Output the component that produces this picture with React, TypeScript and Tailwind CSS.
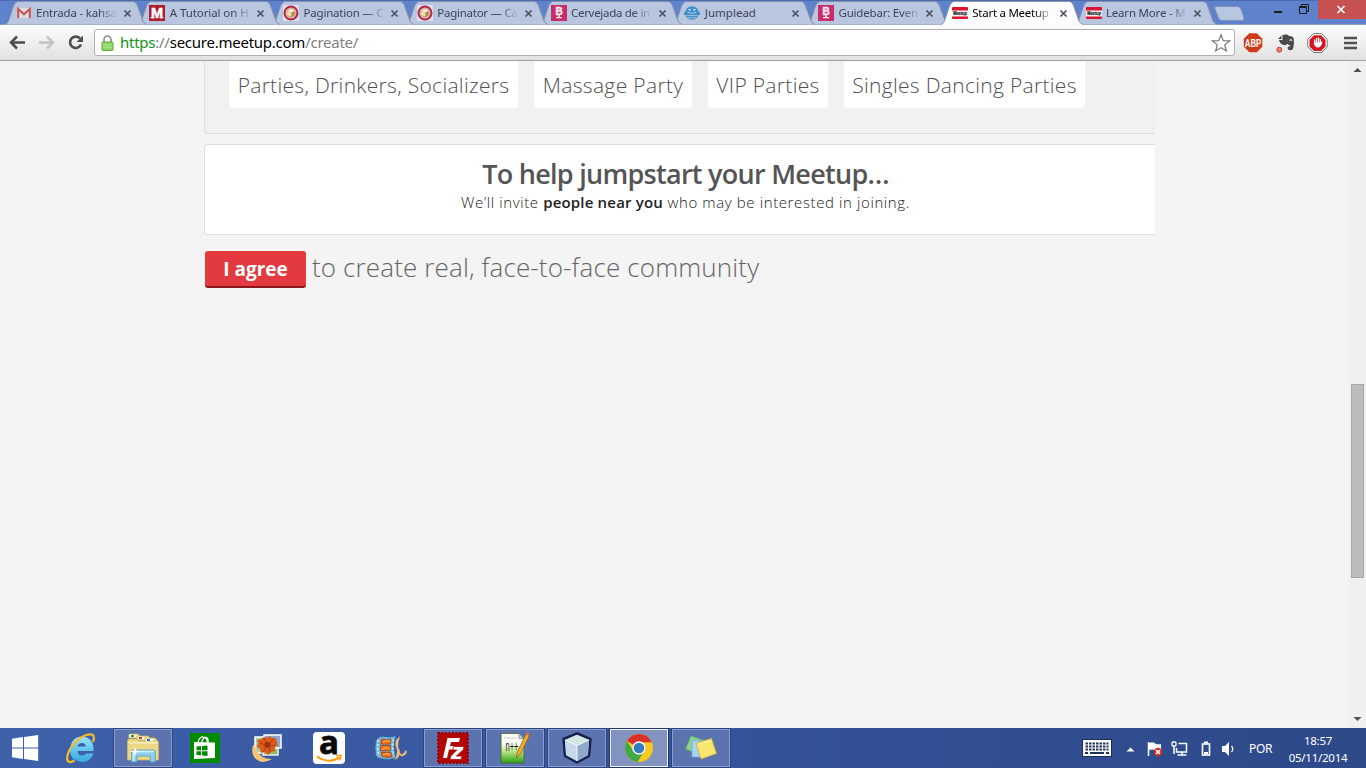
import React from "react";

type TabInfo = { title: string; icon: React.ReactNode; spacing: string; active?: boolean; fade?: boolean };

const GmailIcon = () => (
  <svg width="16" height="16" viewBox="0 0 16 16">
    <rect x="1.500" y="3" width="13" height="10" fill="#dcdde6" />
    <path d="M2.200 13V4l5.800 5.200L13.800 4v9" fill="none" stroke="#c9574f" strokeWidth="2.200" />
  </svg>
);

const MIcon = () => (
  <svg width="16" height="16" viewBox="0 0 16 16">
    <rect width="16" height="16" fill="#b01c30" />
    <text x="8" y="13.200" textAnchor="middle" fontSize="14.500" fontWeight="700" fontFamily="Liberation Sans, sans-serif" fill="#fff" stroke="#fff" strokeWidth=".5">M</text>
    <path d="M1.500 12.700h4M10.500 12.700h4" stroke="#fff" />
  </svg>
);

const CakeIcon = () => (
  <svg width="16" height="16" viewBox="0 0 16 16">
    <rect width="16" height="16" fill="#dfe0ec" />
    <circle cx="8" cy="8" r="6.500" fill="#d9b7a6" stroke="#b32a47" strokeWidth="2" />
    <path d="M4.200 6l3-1.800 4.600 1v5L8 12.200l-3.800-2z" fill="#c08f4e" />
    <path d="M4.200 6l3-1.800 4.600 1L8.500 7.400z" fill="#fbf6e0" />
    <path d="M4.200 6.500l4 1.300v3.700l-4-1.600z" fill="#f3e6c0" />
  </svg>
);

const BIcon = () => (
  <svg width="16" height="16" viewBox="0 0 16 16">
    <rect width="16" height="16" fill="#c52e69" />
    <text x="8" y="10" textAnchor="middle" fontSize="10" fontWeight="700" fontFamily="Liberation Sans, sans-serif" fill="#f6e4ee" stroke="#f6e4ee" strokeWidth=".5">B</text>
    <path d="M7.200 10h1.600v2.500H7.200zM5 12h6v1.300H5z" fill="#f6e4ee" />
  </svg>
);

const JumpleadIcon = () => (
  <svg width="16" height="16" viewBox="0 0 16 16">
    <circle cx="8" cy="8" r="6.800" fill="#3c8fcb" />
    <path d="M4.500 4.800h2.200M9.300 4.800h2.200" stroke="#cfe4f5" strokeWidth="1.600" />
    <rect x="0" y="6.500" width="16" height="3.800" rx="1.500" fill="#3c8fcb" />
    <path d="M3.500 7.200q4.500 2.400 9 0" fill="none" stroke="#b9d3ec" strokeWidth=".9" />
    <path d="M2 10.600h12M4 12.800h8" stroke="#b9c9e2" strokeWidth=".8" />
  </svg>
);

const MeetupIcon = () => (
  <svg width="16" height="16" viewBox="0 0 16 16">
    <rect y="2" width="16" height="12" rx="1" fill="#e0142f" />
    <rect y="5.500" width="16" height="6" fill="#f4eef0" />
    <text x="8" y="10" textAnchor="middle" fontSize="4.800" textLength="13.500" lengthAdjust="spacingAndGlyphs" fontWeight="700" fontFamily="Liberation Sans, sans-serif" fill="#151515" stroke="#151515" strokeWidth=".2">Meetup</text>
  </svg>
);

const TABS: TabInfo[] = [
  { title: "Entrada - kahsa", icon: <GmailIcon />, spacing: "tracking-[-0.200px]", fade: true },
  { title: "A Tutorial on H", icon: <MIcon />, spacing: "tracking-[-0.080px]", fade: true },
  { title: "Pagination — C", icon: <CakeIcon />, spacing: "tracking-[-0.200px]", fade: true },
  { title: "Paginator — Ca", icon: <CakeIcon />, spacing: "tracking-[-0.250px]", fade: true },
  { title: "Cervejada de in", icon: <BIcon />, spacing: "tracking-[-0.300px]", fade: true },
  { title: "Jumplead", icon: <JumpleadIcon />, spacing: "tracking-[0.020px]" },
  { title: "Guidebar: Even", icon: <BIcon />, spacing: "tracking-[-0.200px]", fade: true },
  { title: "Start a Meetup", icon: <MeetupIcon />, spacing: "tracking-[-0.260px]", active: true, fade: true },
  { title: "Learn More - M", icon: <MeetupIcon />, spacing: "tracking-[-0.200px]", fade: true },
];

function Tab({ tab, index }: { tab: TabInfo; index: number }) {
  return (
    <div
      className="relative flex h-[25px] w-[133.750px] shrink-0 items-center pt-px pl-[12px]"
      style={{ zIndex: tab.active ? 20 : 10 - index }}
    >
      <svg className="absolute top-0 left-0" width="143" height="25" viewBox="0 0 143 25">
        <path
          d="M0 24.500Q2.500 23.500 3.500 21L8.500 6Q9.800 2.500 12.500 1.500H128.500Q131 2 132.300 5L138 21Q139 23.500 142 24.500"
          fill={tab.active ? "#fdfdfd" : "#b9c6df"}
          stroke={tab.active ? "#8a96ac" : "#8290ad"}
        />
        {tab.active && <path d="M1 24.500h140" stroke="#fbfbfb" />}
      </svg>
      <div className="relative -ml-px h-4 w-4 shrink-0">{tab.icon}</div>
      <div
        className={
          "relative ml-[4.500px] w-[82px] font-['Noto_Sans',sans-serif] text-[11.500px] leading-4 whitespace-nowrap " +
          tab.spacing +
          (tab.active ? " text-black " : " text-[#3c4357] ") +
          (tab.fade ? "[mask-image:linear-gradient(to_right,black_76%,transparent)]" : "")
        }
      >
        {tab.title}
      </div>
      <svg className="relative ml-[4.500px] shrink-0" width="9" height="9" viewBox="0 0 9 9">
        <path d="M1.500 1.500l6 6M7.500 1.500l-6 6" stroke="#4b5261" strokeWidth="1.700" />
      </svg>
    </div>
  );
}

function TabStrip() {
  return (
    <div className="relative flex h-[25px] border-b border-[#8f9cb5] bg-[#5e82cb] pl-[4.500px] shadow-[inset_0_1px_0_#4d6cb0]">
      {TABS.map((tab, i) => (
        <Tab key={tab.title} tab={tab} index={i} />
      ))}
      <svg className="mt-[5px] ml-[5px] shrink-0" width="34" height="17" viewBox="0 0 34 17">
        <path d="M3 1.500H24.500Q27 1.500 28 4l3 9q.5 2.500-2 2.500H9Q6.500 15.500 5.500 13L2 4Q1 1.500 3 1.500z" fill="#b9c6df" stroke="#7f92bb" />
      </svg>
      <div className="ml-auto flex">
        <svg width="48" height="20" viewBox="0 0 48 20">
          <path d="M4 12h8" stroke="#1d1d1d" strokeWidth="2" />
          <path d="M29.500 6.500h7v7h-7zM29.500 7.500h7M31.500 6V4.500h7v7H37" fill="none" stroke="#1d1d1d" />
        </svg>
        <div className="flex h-[19px] w-[48px] items-center justify-center bg-[#c75050] pr-[2px]">
          <svg width="10" height="9" viewBox="0 0 10 9">
            <path d="M1.500 1l7 7M8.500 1l-7 7" stroke="#fff" strokeWidth="1.700" />
          </svg>
        </div>
      </div>
    </div>
  );
}

function Toolbar() {
  return (
    <div className="flex h-[36px] items-center border-b border-[#a0a0a0] bg-linear-to-b from-[#fdfdfd] to-[#e1e1e1]">
      <svg className="shrink-0" width="94" height="35" viewBox="0 0 94 35">
        <path d="M25 17.500H11.500M17 11.500l-6 6 6 6" fill="none" stroke="#4d4d4d" strokeWidth="2.500" />
        <path d="M39 17.500h13.500M47 11.500l6 6-6 6" fill="none" stroke="#c3c3c3" strokeWidth="2.500" />
        <path d="M80 13.500A5.700 5.700 0 1 0 81 19.500" fill="none" stroke="#4d4d4d" strokeWidth="2.600" />
        <path d="M83 10.500v6.500h-6.500z" fill="#4d4d4d" />
      </svg>
      <div className="flex h-[27px] w-[1141px] shrink-0 items-center rounded-[3px] border border-[#b0b0b0] bg-white pl-[6px]">
        <svg className="shrink-0" width="13" height="16" viewBox="0 0 13 16">
          <path d="M3 7.500V4.500a3.500 3.500 0 0 1 7 0v3" fill="none" stroke="#8b8b8b" strokeWidth="1.600" />
          <rect x="1" y="7" width="11" height="8.500" rx=".8" fill="#8fd565" stroke="#5fa73d" />
          <path d="M2 10h9M2 12.500h9" stroke="#b0e68f" strokeWidth=".8" />
        </svg>
        <div className="ml-[6px] flex-1 pb-[2px] font-['Noto_Sans',sans-serif] text-[15px] leading-5 tracking-[-0.250px] whitespace-nowrap text-[#808080]">
          <span className="text-[#0e9314]">https</span>://<span className="text-black">secure.meetup.com</span>/create/
        </div>
        <svg className="mr-[3px] shrink-0" width="20" height="20" viewBox="0 0 20 20">
          <path d="M10 1.800l2.300 5.800 6.200.3-4.800 4 1.700 6.100L10 14.600 4.600 18l1.700-6.100-4.800-4 6.200-.3z" fill="#fff" stroke="#777" strokeWidth="1.200" />
        </svg>
      </div>
      <svg className="shrink-0" width="131" height="35" viewBox="0 0 131 35">
        <path d="M14.300 8.300h7.500l5.500 5.500v8l-5.500 5.500h-7.500L8.800 21.800v-8z" fill="#cf3a1d" />
        <text x="18" y="21.500" textAnchor="middle" fontSize="10.500" textLength="16.500" lengthAdjust="spacingAndGlyphs" fontWeight="700" fontFamily="Liberation Sans, sans-serif" fill="#fff">ABP</text>
        <path d="M43 14l3.500-3.500V14zM47.500 10q5-1.200 6.500 1 4.200-.2 4.700 2.500.8 4.500-.4 9.500-.6 2.500-3.500 2.300-2.600-.5-2-3 .7-1.300 2.400-.9l.1-1q-2.300-.2-2.700-1.600-1.800 1.800-3.600 1.300-4-.5-5-5h3.500z" fill="#4a4a4a" />
        <path d="M54.500 15.500q1.500-1.500 2.500.2" fill="none" stroke="#ddd" strokeWidth="1.300" />
        <circle cx="44.300" cy="24.700" r="2.500" fill="#ed806d" stroke="#b5493c" />
        <path d="M78.500 8.500h8l5.700 5.700v7.600l-5.700 5.700h-8L72.800 21.800v-7.600z" fill="#fff" stroke="#777" />
        <path d="M79 10.300h7l4.500 4.500v6.800L86 26h-7l-4.500-4.500v-6.700z" fill="#d31721" />
        <path d="M79.700 15v4M81.600 13.300v5M83.500 13v5M85.300 14.500v4" stroke="#fff" strokeWidth="1.300" strokeLinecap="round" />
        <path d="M79 17.500h6.500l1.500-1q.8 0 .2 1.200-1.200 4.800-4.300 4.800-3.300 0-3.900-5z" fill="#fff" />
        <path d="M109 13h13M109 18h13M109 23h13" stroke="#505050" strokeWidth="2.600" />
      </svg>
    </div>
  );
}

const CHIPS: { label: string; cls: string }[] = [
  { label: "Parties, Drinkers, Socializers", cls: "w-[289px] tracking-[0.300px]" },
  { label: "Massage Party", cls: "w-[158px] tracking-[0.350px]" },
  { label: "VIP Parties", cls: "w-[120px] tracking-[0.320px]" },
  { label: "Singles Dancing Parties", cls: "w-[241px] tracking-[0.300px]" },
];

function Page() {
  return (
    <div className="flex h-[667px] bg-[#f4f4f4] font-['Open_Sans',sans-serif]">
      <main className="w-[1155px] pl-[204px]">
        <div className="flex h-[73px] gap-4 rounded-bl-[4px] border-b border-l border-[#dedede] bg-[#f1f1f1] pl-[24px]">
          {CHIPS.map((c) => (
            <div
              key={c.label}
              className={"flex h-[47px] justify-center rounded-b-[4px] bg-white pt-[9px] text-[21px] leading-[30px] font-light whitespace-nowrap text-[#505050] " + c.cls}
            >
              {c.label}
            </div>
          ))}
        </div>
        <section className="mt-[10px] h-[91px] rounded-l-[4px] border-y border-l border-[#dedede] bg-white pt-[11px] pl-[11px] text-center">
          <h2 className="text-[27px] leading-[36px] font-semibold tracking-[-0.720px] whitespace-nowrap text-[#555]">To help jumpstart your Meetup…</h2>
          <p className="text-[15px] leading-[20px] tracking-[0.610px] whitespace-nowrap text-[#222]">
            <span className="font-light">We’ll invite </span>
            <b className="font-semibold tracking-[0.180px]">people near you</b>
            <span className="font-light"> who may be interested in joining.</span>
          </p>
        </section>
        <div className="mt-[16px] flex pl-px">
          <button className="h-[37px] w-[101px] rounded-[3px] border-b-2 border-[#8c181c] bg-[#e23a3e] text-[19px] leading-[34px] font-bold text-white">I agree</button>
          <div className="ml-[6px] text-[26px] leading-[32px] font-light tracking-[0.140px] whitespace-nowrap text-[#666]">to create real, face-to-face community</div>
        </div>
      </main>
      <aside className="ml-auto flex w-[17px] flex-col items-center bg-[#f0f0f0]">
        <svg width="17" height="17" viewBox="0 0 17 17">
          <path d="M4.500 11h8l-4-4z" fill="#505050" />
        </svg>
        <div className="mt-[306px] h-[194px] w-[13px] border border-[#a8a8a8] bg-[#bcbcbc]" />
        <svg className="mt-auto" width="17" height="17" viewBox="0 0 17 17">
          <path d="M4.500 6h8l-4 4z" fill="#505050" />
        </svg>
      </aside>
    </div>
  );
}

const WindowsLogo = () => (
  <svg width="28" height="28" viewBox="0 0 28 28">
    <path d="M1 4.700l11-1.600v10.400H1zM13 3l14.200-2v12.500H13zM1 14.500h11v10.400L1 23.300zM13 14.500h14.200V27L13 25z" fill="#fff" />
  </svg>
);

const IEIcon = () => (
  <svg width="32" height="32" viewBox="0 0 32 32">
    <defs>
      <linearGradient id="ie" x1="0" y1="0" x2="0" y2="1">
        <stop offset="0" stopColor="#9be4fb" />
        <stop offset="1" stopColor="#34a9e2" />
      </linearGradient>
    </defs>
    <path d="M28.500 19H12.500q.5 4.500 4.500 4.500 3 0 4.300-2H28.500Q25.500 30 17 30 5 29 5 17.500 6 5 17 4.500 29 5.500 28.500 19zM12.500 14.500h8.500q-.6-3.500-4-3.600-3.900.1-4.500 3.600z" fill="url(#ie)" />
    <path d="M28 10Q31.500 0 21 3 9.500 8 4 19 0 28.500 4.500 30q2.500.3 5-1.500" fill="none" stroke="#f3bd27" strokeWidth="2.200" />
  </svg>
);

const ExplorerIcon = () => (
  <svg width="34" height="32" viewBox="0 0 34 32">
    <path d="M3 6V3q0-1 1-1h8l2 2v2z" fill="#f2dc93" stroke="#d3b35e" strokeWidth=".7" />
    <path d="M11 8V5q0-1 1-1h10l2 2v3z" fill="#f2dc93" stroke="#d3b35e" strokeWidth=".7" />
    <path d="M19 10V7q0-1 1-1h9l2 2v3z" fill="#f2dc93" stroke="#d3b35e" strokeWidth=".7" />
    <path d="M1.500 9q0-2 1.500-2h8l2 2h18q1.500 0 1.500 1.500V28h-31z" fill="#eed783" stroke="#d4b660" strokeWidth=".8" />
    <path d="M3 4h7M12 6h6M20 8h7" stroke="#fff" strokeWidth="2.500" />
    <path d="M5 3h3v2H5z" fill="#1aa32b" />
    <path d="M13 5h3v2h-3z" fill="#c93926" />
    <path d="M21 7h3v2h-3z" fill="#1972cf" />
    <path d="M2.500 10.800h29" stroke="#faf0bd" strokeWidth="1.500" />
    <path d="M5.500 30V20q0-2 2-2h20q1.800 0 1.800 2v10h-5v-6H11v6z" fill="#8ed0ee" stroke="#4d9dcb" strokeWidth=".8" />
    <path d="M7 19.500h21M7.500 21v8" stroke="#d8f4ff" strokeWidth="1.300" />
    <path d="M9 14l1 4.500 4 1-4 1-1 4-1-4-4-1 4-1z" fill="#fff" />
  </svg>
);

const StoreIcon = () => (
  <svg width="30" height="30" viewBox="0 0 30 30">
    <rect width="30" height="30" fill="#008a00" />
    <path d="M4 9l21 .500v15.500L4 26z" fill="#fff" />
    <path d="M8 9.500q1.500-6 5-5.500 4 0 4.500 5.500M11.500 9.500q2-5.500 4.500-5 2.500 0 2 5" fill="none" stroke="#fff" strokeWidth="1.300" />
    <path d="M6.500 13.500l4.500-.5v4.300H6.500zM12 13l5.500-.6v4.900H12zM6.500 18.300H11v4l-4.500-.4zM12 18.300h5.500v4.600l-5.500-.5z" fill="#008a00" />
  </svg>
);

const PhotosIcon = () => (
  <svg width="32" height="30" viewBox="0 0 32 30">
    <path d="M4 4h10v16H4z" fill="#a7cfb0" stroke="#fff" strokeWidth="1.500" />
    <path d="M12 13h15v9H12z" fill="#92bb65" stroke="#eee" strokeWidth="1.500" />
    <rect x="13" y="2" width="17" height="13" fill="#8aa8d4" stroke="#fff" strokeWidth="1.500" />
    <path d="M13 4l3 1 3-2 2 2h4l1 4 1 3-3 2v4l-4 1-3 3-3-3-4 1-1-4-3-2 1-4-1-3 4-1z" fill="#dd5a18" />
    <circle cx="16.500" cy="12" r="3" fill="#9b3515" />
    <path d="M13 5l2 5M23 6l-5 4M9 10l5 2M24 12l-5 1M12 19l3-5M19 20l-1-5" stroke="#9c3b13" strokeWidth=".8" />
    <path d="M2 12Q-1 24 8 28q6 2.500 13-2Q9 26 5 16 4 12 2 12z" fill="#f6c477" />
  </svg>
);

const AmazonIcon = () => (
  <svg width="32" height="32" viewBox="0 0 32 32">
    <rect width="32" height="32" rx="4" fill="#fff" />
    <text x="16" y="22" textAnchor="middle" fontSize="33" fontWeight="700" fontFamily="Open Sans, sans-serif" fill="#080808" stroke="#080808" strokeWidth=".8">a</text>
    <path d="M4 24.500q12 8 23 .7" fill="none" stroke="#ff9900" strokeWidth="2" />
    <path d="M23 24q6-2 5 .8-.5 2.300-2 3.500" fill="none" stroke="#ff9900" strokeWidth="1.400" />
  </svg>
);

const MovieIcon = () => (
  <svg width="34" height="28" viewBox="0 0 34 28">
    <path d="M2 7Q4 2 9 2.500q8 1.500 13-1-2.500 6-2 12t2 10q-6 3-13 1.500-5-.5-7-3-2-8 0-15z" fill="#79b9e0" stroke="#2a6ca6" strokeWidth=".8" />
    <path d="M7.500 5q4 1 9.500 0l-.7 5q-4.500.6-9.500 0zM6.500 11.500h10v5.500h-10zM7 18.500h10l1 4.500q-5 1-10-.5z" fill="#f06a19" stroke="#893d23" strokeWidth=".7" />
    <path d="M4 6Q3 14 5 22M19.500 5.500q-1.500 8 .3 16" fill="none" stroke="#e3f2fa" strokeWidth="1.400" strokeDasharray="2 2" />
    <path d="M26 2.500q-5.500 3-4.500 9 2.500 5 1 10-.7 2.500-2.500 4 5-.5 5.500-6-.2-4-1.500-7 0-5 2-10z" fill="#edc78e" stroke="#a98253" strokeWidth=".5" />
    <path d="M24.500 15q0 6 4 6.500 3-1 3.500-5M29 20q2-1 3.500-.5" fill="none" stroke="#e3b87c" strokeWidth="1.800" />
    <path d="M9 8.500l4-2 3 1.500M8 15.500l4-2 4 1.500M9 21l4-1.500 3 1" stroke="#ffb437" strokeWidth="1.200" fill="none" />
  </svg>
);

const FileZillaIcon = () => (
  <svg width="32" height="32" viewBox="0 0 32 32">
    <rect x="1" y="1" width="30" height="30" fill="#b30707" stroke="#970000" strokeWidth="2" strokeDasharray="2 1.500" />
    <path d="M6 26L10.500 6H23l-1 4h-8l-1 4h6l-1 3.500h-6L10 26z" fill="#fff" />
    <path d="M16.500 14.500H27l-.7 3.300-7 6.200H25l-.7 3.500H13l.8-3.500 6-6h-4z" fill="#fff" stroke="#b30707" strokeWidth=".8" />
  </svg>
);

const NotepadIcon = () => (
  <svg width="30" height="32" viewBox="0 0 30 32">
    <defs>
      <linearGradient id="npp" x1="0" y1="0" x2="0" y2="1">
        <stop offset=".35" stopColor="#fcfcf7" />
        <stop offset=".6" stopColor="#bce58b" />
        <stop offset="1" stopColor="#2da00c" />
      </linearGradient>
    </defs>
    <path d="M1 1.500h18l5 5V31H1z" fill="url(#npp)" stroke="#476c3b" />
    <path d="M2 1h17" stroke="#777" strokeDasharray="1.500 1.500" strokeWidth="2" />
    <path d="M19 1.500v5h5z" fill="#ced6d6" stroke="#777" strokeWidth=".7" />
    <path d="M4 6h13" stroke="#cdd5cf" />
    <text x="5.500" y="19" fontSize="14" textLength="13" lengthAdjust="spacingAndGlyphs" fontFamily="Liberation Sans, sans-serif" fill="#17191a">n++</text>
    <path d="M26 2L17.500 20l-1.300 6 4.500-4.500L29.500 3.500z" fill="#efad32" stroke="#9b621b" strokeWidth=".8" />
    <path d="M26.500 0l3.300 1.500-1 2.300-3.300-1.600z" fill="#d86b5c" />
  </svg>
);

const CubeIcon = () => (
  <svg width="32" height="32" viewBox="0 0 32 32">
    <path d="M16 1.500L29.500 7 28 24 16 30.500 4 24 2.500 7z" fill="#a9c2d6" stroke="#18204c" strokeWidth="2.500" strokeLinejoin="round" />
    <path d="M16 2.800L28 8 16 13.500 4 8z" fill="#d4e6e2" />
    <path d="M4 8l12 5.500V29L5 23z" fill="#c6d8e9" />
    <path d="M28 8l-12 5.500V29l11-6z" fill="#8fa9ca" />
    <path d="M16 13.500V29M4 8l12 5.500L28 8" stroke="#eff8ff" fill="none" />
  </svg>
);

const ChromeIcon = () => (
  <svg width="30" height="30" viewBox="0 0 30 30">
    <circle cx="15" cy="15" r="14" fill="#f6c91c" />
    <path d="M15 15L2.900 8A14 14 0 0 1 27.800 9.300H15z" fill="#d9322c" />
    <path d="M2.900 8A14 14 0 0 0 13.700 29L19.500 19 15 15 9.300 18z" fill="#42a746" />
    <circle cx="15" cy="15" r="6.700" fill="#f5f7f7" />
    <circle cx="15" cy="15" r="5.300" fill="#367bc2" />
  </svg>
);

const NotesIcon = () => (
  <svg width="34" height="28" viewBox="0 0 34 28">
    <path d="M7 2l12 4-5 14L1.500 15z" fill="#8fd58c" stroke="#57ab66" strokeWidth=".8" />
    <path d="M8 6.500h13V23H8z" fill="#a9d4fa" stroke="#6ca8df" strokeWidth=".8" />
    <path d="M12 9l15.500-4.500 5 15L17 25z" fill="#f8e66f" stroke="#c8ad38" strokeWidth=".8" />
    <path d="M14 10.500l13-3.700" stroke="#fff6a9" />
  </svg>
);

const TASKS: { name: string; icon: React.ReactNode; state: "idle" | "open" | "active" }[] = [
  { name: "ie", icon: <IEIcon />, state: "idle" },
  { name: "explorer", icon: <ExplorerIcon />, state: "open" },
  { name: "store", icon: <StoreIcon />, state: "idle" },
  { name: "photos", icon: <PhotosIcon />, state: "idle" },
  { name: "amazon", icon: <AmazonIcon />, state: "idle" },
  { name: "movie", icon: <MovieIcon />, state: "idle" },
  { name: "filezilla", icon: <FileZillaIcon />, state: "open" },
  { name: "notepad", icon: <NotepadIcon />, state: "open" },
  { name: "cube", icon: <CubeIcon />, state: "open" },
  { name: "chrome", icon: <ChromeIcon />, state: "active" },
  { name: "notes", icon: <NotesIcon />, state: "open" },
];

const STATES = {
  idle: "",
  open: "border border-[#8b9dcb] bg-[#5b74b0] outline outline-[#2c4580]",
  active: "border border-[#f0f3fa] bg-[#8293bf] outline outline-[#22376d]",
};

function Taskbar() {
  return (
    <div className="flex h-[40px] bg-linear-to-r from-[#3e61a9] via-[#35539c] via-50% to-[#2d4988] font-['Noto_Sans',sans-serif] text-white">
      <div className="flex w-[52px] items-center justify-center pr-[2px]">
        <WindowsLogo />
      </div>
      <div className="flex gap-1 pt-px">
        {TASKS.map((t) => (
          <div key={t.name} className={"flex h-[38px] w-[58px] items-center justify-center " + STATES[t.state]}>
            {t.icon}
          </div>
        ))}
      </div>
      <svg className="ml-auto shrink-0" width="160" height="40" viewBox="0 0 160 40">
        <rect x="2.500" y="11.500" width="29" height="17" fill="#fff" stroke="#1c2d5c" />
        <path d="M5.500 15.500h23M5.500 18.500h23M5.500 21.500h23" stroke="#203260" strokeWidth="2" strokeDasharray="2.500 1" />
        <path d="M5 25h3M10 25h14M26 25h3" stroke="#203260" strokeWidth="2" />
        <path d="M46.500 23.500l4-4 4 4z" fill="#fff" />
        <path d="M68.500 14v14" stroke="#fff" strokeWidth="1.500" />
        <path d="M69 15q4-2 7 1 2 .6 5 0v7q-4 1-6-1-3-1-6 0z" fill="#fff" />
        <circle cx="78" cy="24" r="4.300" fill="#d92922" />
        <path d="M76 22l4 4M80 22l-4 4" stroke="#fff" strokeWidth="1.600" />
        <path d="M98.500 15.500h8v8.500h-10v-4" fill="none" stroke="#fff" strokeWidth="1.500" />
        <path d="M102 24v3M97.500 27h9M94 17v9" stroke="#fff" strokeWidth="1.500" />
        <rect x="92" y="14" width="4" height="4" rx="1" fill="#2e4a8a" stroke="#fff" strokeWidth="1.300" />
        <rect x="122.500" y="16" width="7" height="11" fill="none" stroke="#fff" strokeWidth="1.600" />
        <path d="M124 14.500h4M124 25h4" stroke="#fff" strokeWidth="2" />
        <path d="M142 18h3l4-4v14l-4-4h-3z" fill="#fff" />
        <path d="M151.500 18q2.500 3 0 6" fill="none" stroke="#fff" strokeWidth="1.300" />
      </svg>
      <div className="flex w-[42px] items-center justify-center pt-px pr-px text-[12px] tracking-[-0.350px]">POR</div>
      <div className="mr-[8px] -ml-[4px] flex w-[80px] flex-col items-center pt-[4px] text-[11.500px] leading-[17px] tracking-[-0.250px] whitespace-nowrap">
        <span>18:57</span>
        <span>05/11/2014</span>
      </div>
    </div>
  );
}

export default function App() {
  return (
    <div className="h-[768px] w-[1366px] overflow-hidden bg-[#f4f4f4]">
      <TabStrip />
      <Toolbar />
      <Page />
      <Taskbar />
    </div>
  );
}
